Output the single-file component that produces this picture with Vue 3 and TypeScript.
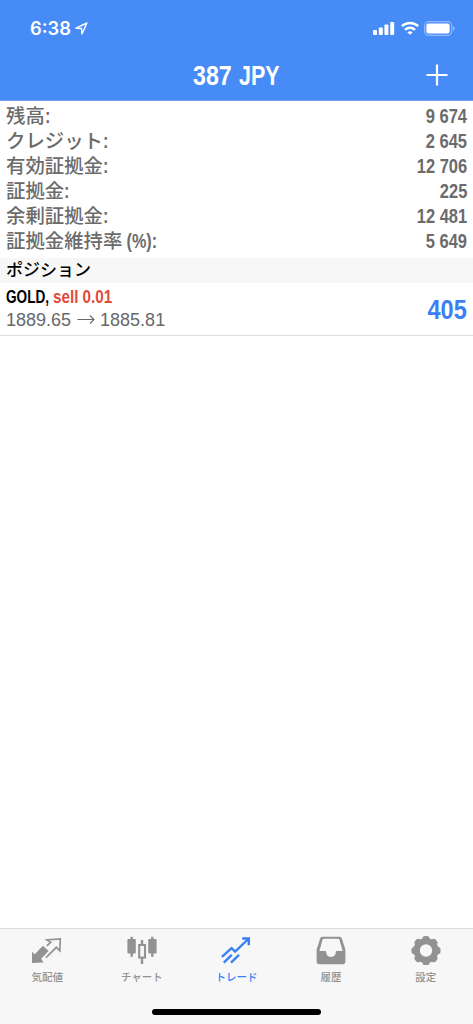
<script setup lang="ts">
interface SummaryRow {
  label: string
  suffix: string
  value: string
}

type TabIcon = 'quotes' | 'chart' | 'trade' | 'history' | 'settings'

interface Tab {
  label: string
  icon: TabIcon
}

const summary: SummaryRow[] = [
  { label: '残高', suffix: ':', value: '9 674' },
  { label: 'クレジット', suffix: ':', value: '2 645' },
  { label: '有効証拠金', suffix: ':', value: '12 706' },
  { label: '証拠金', suffix: ':', value: '225' },
  { label: '余剰証拠金', suffix: ':', value: '12 481' },
  { label: '証拠金維持率', suffix: ' (%):', value: '5 649' },
]

const tabs: Tab[] = [
  { label: '気配値', icon: 'quotes' },
  { label: 'チャート', icon: 'chart' },
  { label: 'トレード', icon: 'trade' },
  { label: '履歴', icon: 'history' },
  { label: '設定', icon: 'settings' },
]

const activeTab: TabIcon = 'trade'
const gearAngles: number[] = [0, 45, 90, 135, 180, 225, 270, 315]
</script>

<template>
  <div class="screen">
    <header class="top">
      <div class="status">
        <div class="clock">
          <span>6:38</span>
          <svg class="location" width="13" height="13" viewBox="0 0 13 13">
            <path d="M0.9 6.2 11.9 1 7 12 6.6 6.5Z" fill="none" stroke="#fff" stroke-width="1.4" stroke-linejoin="round" />
          </svg>
        </div>
        <div class="indicators">
          <svg width="22" height="14" viewBox="0 0 22 14" fill="#fff">
            <rect x="0" y="9" width="4" height="5" rx="1" />
            <rect x="5.8" y="6.4" width="4" height="7.6" rx="1" />
            <rect x="11.4" y="3.6" width="4" height="10.4" rx="1" />
            <rect x="17.2" y="1" width="4" height="13" rx="1" />
          </svg>
          <svg class="wifi" width="18" height="14" viewBox="0 0 18 14" fill="none" stroke="#fff" stroke-width="2.5">
            <path d="M0.9 5.2a11.6 11.6 0 0 1 16.2 0" />
            <path d="M4 8.8a7.2 7.2 0 0 1 10 0" />
            <path d="M9 13.7 6.4 11.4a3.8 3.8 0 0 1 5.2 0Z" fill="#fff" stroke="none" />
          </svg>
          <svg class="battery" width="31" height="15" viewBox="0 0 31 15">
            <rect x="0.7" y="0.7" width="27" height="13.6" rx="4" fill="none" stroke="#fff" stroke-opacity=".4" stroke-width="1.3" />
            <rect x="2.4" y="2.4" width="23.2" height="10.2" rx="2" fill="#fff" />
            <path d="M29 5.3a2.3 2.3 0 0 1 0 4.4Z" fill="#fff" fill-opacity=".45" />
          </svg>
        </div>
      </div>
      <div class="nav">
        <h1><span class="narrow amount">387</span><span class="narrow currency">JPY</span></h1>
        <svg class="plus" width="22" height="22" viewBox="0 0 22 22">
          <path d="M0.5 11h21M11 0.5v21" stroke="#fff" stroke-width="2.2" fill="none" />
        </svg>
      </div>
    </header>

    <main class="content">
      <dl class="summary">
        <div v-for="row in summary" :key="row.label" class="summary-row">
          <dt>{{ row.label }}<span class="narrow suffix">{{ row.suffix }}</span></dt>
          <dd class="narrow">{{ row.value }}</dd>
        </div>
      </dl>
      <h2 class="section">ポジション</h2>
      <div class="position">
        <div class="details">
          <div class="symbol"><span class="narrow name">GOLD,</span><span class="narrow sell">sell 0.01</span></div>
          <div class="prices">
            <span>1889.65</span>
            <svg width="18" height="10" viewBox="0 0 18 10" fill="none" stroke="#68686b" stroke-width="1.1">
              <path d="M0.5 4.5h16.5M13 0.5l4 4-4 4" />
            </svg>
            <span>1885.81</span>
          </div>
        </div>
        <div class="profit narrow">405</div>
      </div>
    </main>

    <nav class="tabs">
      <div v-for="tab in tabs" :key="tab.icon" class="tab" :class="{ active: tab.icon === activeTab }">
        <svg class="icon" width="32" height="30" viewBox="0 0 32 30">
          <g v-if="tab.icon === 'quotes'">
            <path d="M1 28V16.8L3.8 19.2 11.2 11.4Q12 10.6 12.8 11.4L17.6 16 10.2 23.8 12.6 27.6Z" fill="currentColor" />
            <path d="M15.8 10.8 19.6 7.4 16 5 29.3 4 28.8 15.8 25.4 12.3 15 22.6" fill="none" stroke="currentColor" stroke-width="1.7" />
          </g>
          <g v-else-if="tab.icon === 'chart'" fill="currentColor">
            <rect x="4.5" y="1.8" width="2.4" height="20" />
            <rect x="1.4" y="4" width="8.4" height="14.5" rx="1" />
            <rect x="25.1" y="1.8" width="2.4" height="20" />
            <rect x="22.2" y="4" width="8.4" height="14.5" rx="1" />
            <path d="M14.8 5h2.4v5h-2.4zM14.8 23h2.4v6h-2.4z" />
            <rect x="13.2" y="10" width="5.8" height="12.6" fill="none" stroke="currentColor" stroke-width="2.1" />
          </g>
          <g v-else-if="tab.icon === 'trade'" fill="none" stroke="currentColor" stroke-width="2.4">
            <path d="M1.9 21.8 11.6 13.2 15.1 16.6 28.3 4M22.2 3.5H28.8V10.2" />
            <path d="M3.8 27.6 11.8 19.8M11 27.6 19 19.8" />
          </g>
          <g v-else-if="tab.icon === 'history'">
            <path
              d="M7.3 1.8H24.7Q26.4 1.8 26.9 3.4L30.4 14.8V26.5Q30.4 29.3 27.8 29.3H4.2Q1.6 29.3 1.6 26.5V14.8L5.1 3.4Q5.6 1.8 7.3 1.8ZM8.6 3.8Q7.8 3.8 7.6 4.6L4.4 16H10.3Q11.2 16 11.2 17Q11.4 21.9 16 21.9T20.8 17Q20.8 16 21.7 16H27.6L24.4 4.6Q24.2 3.8 23.4 3.8Z"
              fill="currentColor"
              fill-rule="evenodd"
            />
          </g>
          <g v-else fill="currentColor">
            <circle cx="16" cy="15.5" r="9.4" fill="none" stroke="currentColor" stroke-width="6.4" />
            <rect
              v-for="angle in gearAngles"
              :key="angle"
              x="12.5"
              y="1"
              width="7"
              height="7"
              rx="2.6"
              :transform="`rotate(${angle} 16 15.5)`"
            />
          </g>
        </svg>
        <span>{{ tab.label }}</span>
      </div>
      <div class="home-indicator"></div>
    </nav>
  </div>
</template>

<style>
html,
body {
  margin: 0;
  background: #fff;
}
</style>

<style scoped>
.screen {
  display: flex;
  flex-direction: column;
  width: 473px;
  height: 1024px;
  overflow: hidden;
  background: #fff;
  font-family: 'Liberation Sans', 'Noto Sans CJK JP', sans-serif;
}

.narrow {
  display: inline-block;
  font-weight: 700;
  white-space: pre;
  transform: scaleX(0.825);
  transform-origin: left center;
}

.top {
  flex: none;
  box-sizing: border-box;
  height: 101px;
  background: #478bf6;
  border-bottom: 1px solid #709fe5;
  color: #fff;
}

.status {
  display: flex;
  justify-content: space-between;
  align-items: center;
  height: 52px;
  padding: 4px 18px 0 30px;
  box-sizing: border-box;
}

.clock {
  display: flex;
  align-items: center;
  gap: 4.5px;
  font: 600 18.3px/24px Inter, sans-serif;
}

.indicators {
  display: flex;
  align-items: center;
  gap: 5.5px;
}

.nav {
  display: grid;
  grid-template-columns: 1fr auto 1fr;
  align-items: center;
  height: 48px;
  padding-right: 25px;
  padding-left: 25px;
}

h1 {
  display: flex;
  grid-column: 2;
  margin: 0;
  font-size: 27.5px;
  line-height: 48px;
}

.amount {
  width: 46px;
  transform: scaleX(0.845);
}

.currency {
  width: 41px;
  transform: scaleX(0.78);
}

.plus {
  justify-self: end;
  margin-bottom: 2px;
}

.content {
  flex: 1;
}

.summary {
  margin: 0;
  padding: 2.7px 6px 3.9px;
}

.summary-row {
  display: flex;
  justify-content: space-between;
  height: 25.1px;
  color: #6b6b6b;
  line-height: 25px;
}

dt {
  font-size: 19.4px;
  font-weight: 500;
  white-space: pre;
}

.suffix {
  font-size: 19.5px;
  transform: scaleX(0.83);
}

dd {
  margin: 0;
  font-size: 20px;
  line-height: 24px;
}

dd.narrow,
.profit.narrow {
  transform-origin: right center;
}

.section {
  height: 25px;
  margin: 0;
  padding-left: 6px;
  background: #f7f7f7;
  color: #000;
  font-size: 17px;
  font-weight: 500;
  line-height: 26px;
}

.position {
  display: flex;
  justify-content: space-between;
  align-items: center;
  height: 52px;
  padding: 0 6px;
  border-bottom: 1px solid #dedede;
}

.details {
  padding-bottom: 2px;
}

.symbol {
  display: flex;
  color: #000;
  font-size: 18px;
  line-height: 24px;
}

.name {
  width: 47px;
  transform: scaleX(0.755);
}

.sell {
  color: #e14b3c;
  transform: scaleX(0.845);
}

.prices {
  display: flex;
  align-items: center;
  gap: 5.5px;
  color: #68686b;
  font-size: 18px;
  line-height: 23px;
}

.profit {
  padding-top: 2px;
  color: #3a7ff6;
  font-size: 28px;
}

.profit.narrow {
  transform: scaleX(0.84);
}

.tabs {
  position: relative;
  display: grid;
  grid-template-columns: repeat(5, 1fr);
  flex: none;
  box-sizing: border-box;
  height: 96px;
  padding-top: 6px;
  border-top: 1px solid #dadada;
  background: #f7f7f7;
}

.tab {
  display: flex;
  flex-direction: column;
  align-items: center;
  color: #929292;
  font-size: 10.5px;
  font-weight: 500;
  line-height: 16px;
}

.tab span {
  margin-top: 4px;
}

.active {
  color: #3a7ff6;
}

.home-indicator {
  position: absolute;
  bottom: 9px;
  left: 152px;
  width: 169px;
  height: 6px;
  border-radius: 3px;
  background: #000;
}
</style>
